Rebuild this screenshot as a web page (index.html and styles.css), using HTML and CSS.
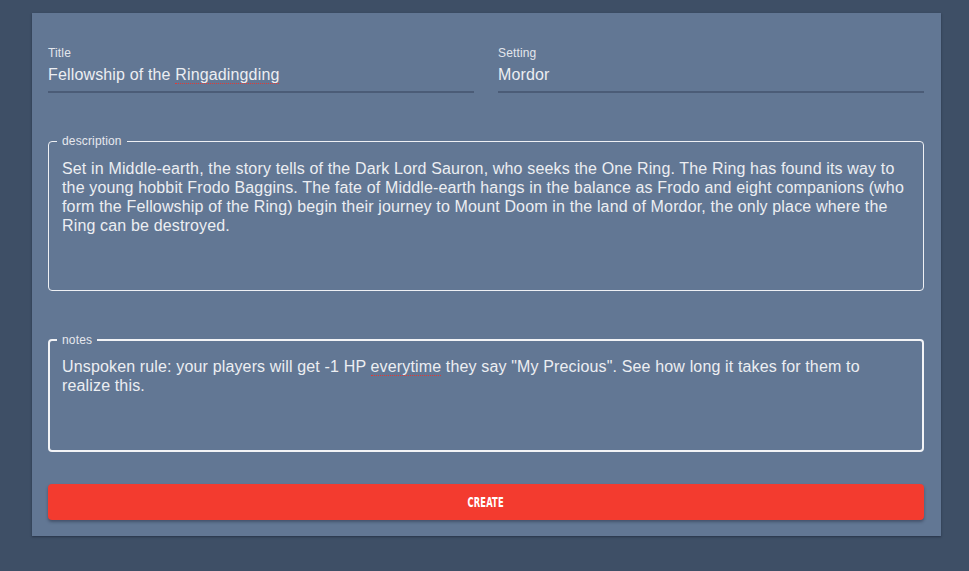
FILE: index.html
```html
<!DOCTYPE html>
<html lang="en">
<head>
<meta charset="utf-8">
<title>Create Campaign</title>
<link rel="stylesheet" href="styles.css">
</head>
<body>
<main class="card">
  <div class="row">
    <div class="field">
      <label class="field-label">Title</label>
      <div class="field-value">Fellowship of the <span class="misspelled">Ringadingding</span></div>
    </div>
    <div class="field">
      <label class="field-label">Setting</label>
      <div class="field-value">Mordor</div>
    </div>
  </div>

  <fieldset class="outlined desc">
    <legend class="outlined-legend">description</legend>
    <div class="outlined-text rows-6">Set in Middle-earth, the story tells of the Dark Lord Sauron, who seeks the One Ring. The Ring has found its way to the young hobbit Frodo Baggins. The fate of Middle-earth hangs in the balance as Frodo and eight companions (who form the Fellowship of the Ring) begin their journey to Mount Doom in the land of Mordor, the only place where the Ring can be destroyed.</div>
  </fieldset>

  <fieldset class="outlined notes focused">
    <legend class="outlined-legend">notes</legend>
    <div class="outlined-text rows-4">Unspoken rule: your players will get -1 HP <span class="misspelled">everytime</span> they say "My Precious". See how long it takes for them to realize this.</div>
  </fieldset>

  <button class="create-btn" type="button"><span class="create-label">CREATE</span></button>
</main>
</body>
</html>
```

FILE: styles.css
```css
html, body {
  margin: 0;
  padding: 0;
}

body {
  background: #3e4f66;
  font-family: "Liberation Sans", Arial, sans-serif;
  color: #e7e9ee;
  padding-top: 13px;
  height: 571px;
  box-sizing: border-box;
}

.card {
  width: 909px;
  margin-left: 32px;
  background: #627794;
  box-sizing: border-box;
  padding: 34px 17px 16px 16px;
  box-shadow: 0 1px 2px rgba(20, 30, 45, 0.55);
  display: flex;
  flex-direction: column;
}

.row {
  display: flex;
  gap: 24px;
}

.field {
  flex: 1;
  display: flex;
  flex-direction: column;
}

.field-label {
  font-size: 12px;
  line-height: 12px;
  letter-spacing: 0.15px;
  color: #e3e6ec;
}

.field-value {
  font-size: 16px;
  line-height: 19px;
  letter-spacing: 0.15px;
  margin-top: 6px;
  padding-bottom: 7px;
  border-bottom: 2px solid #4b5c77;
  color: #eceef2;
}

.misspelled {
  display: inline-block;
  line-height: 16px;
  border-bottom: 1px dotted #e23a36;
}

.outlined {
  margin: 42px 0 0 0;
  padding: 0;
  border: 1px solid #eef0f4;
  border-radius: 4px;
  min-width: 0;
}

.outlined.focused {
  margin-top: 43px;
  border-width: 2px;
  border-color: #f2f3f6;
}

.outlined-legend {
  margin-left: 8px;
  padding: 0 5px;
  font-size: 12px;
  line-height: 12px;
  letter-spacing: 0.15px;
  color: #e6e8ee;
}

.focused .outlined-legend {
  margin-left: 7px;
}

.outlined-text {
  font-size: 16px;
  line-height: 19px;
  letter-spacing: 0.15px;
  padding: 12px 14px 17px 13px;
  color: #eceef2;
}

.focused .outlined-text {
  padding: 11px 14px 17px 12px;
}

.rows-6 {
  height: 114px;
}

.rows-4 {
  height: 76px;
}

.create-btn {
  margin-top: 32px;
  height: 36px;
  border: none;
  border-radius: 4px;
  background: #f33b2f;
  color: #ffffff;
  box-shadow: 0 2px 3px rgba(30, 40, 60, 0.45);
  display: flex;
  align-items: center;
  justify-content: center;
  padding: 0;
  cursor: pointer;
}

.create-label {
  display: inline-block;
  font-family: "DejaVu Sans Condensed", "DejaVu Sans", sans-serif;
  font-weight: bold;
  font-size: 14px;
  letter-spacing: 0.3px;
  transform: scaleX(0.66);
}
```
